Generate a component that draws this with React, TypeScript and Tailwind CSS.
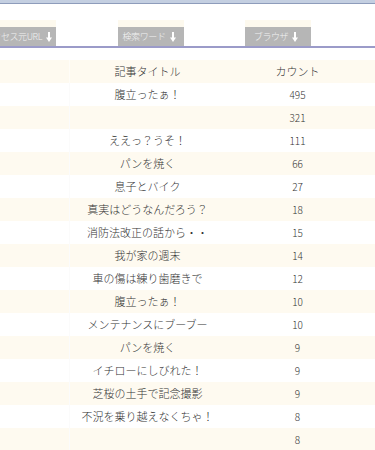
const rows: [string, string][] = [
  ["腹立ったぁ！", "495"],
  ["", "321"],
  ["ええっ？うそ！", "111"],
  ["パンを焼く", "66"],
  ["息子とバイク", "27"],
  ["真実はどうなんだろう？", "18"],
  ["消防法改正の話から・・", "15"],
  ["我が家の週末", "14"],
  ["車の傷は練り歯磨きで", "12"],
  ["腹立ったぁ！", "10"],
  ["メンテナンスにブーブー", "10"],
  ["パンを焼く", "9"],
  ["イチローにしびれた！", "9"],
  ["芝桜の土手で記念撮影", "9"],
  ["不況を乗り越えなくちゃ！", "8"],
  ["", "8"],
];

function DownArrow() {
  return (
    <svg width="6" height="10" viewBox="0 0 6 10" className="ml-[4px] shrink-0" aria-hidden>
      <rect x="2" y="0" width="2" height="6" fill="#ffffff" />
      <path d="M0 5.5 H6 L3 10 Z" fill="#ffffff" />
    </svg>
  );
}

function SortButton({ label, width, align }: { label: string; width: string; align: "end" | "center" }) {
  return (
    <div className={`flex flex-col ${width}`}>
      <div className="h-[7px] bg-[#fdf9ee]" />
      <div
        className={`flex h-[19px] items-center overflow-hidden whitespace-nowrap bg-[#b6b6b6] pr-[4px] text-[9px] font-light tracking-[-0.4px] text-[#f2f2f2] ${
          align === "end" ? "justify-end" : "justify-center"
        }`}
      >
        {label}
        <DownArrow />
      </div>
    </div>
  );
}

export default function App() {
  return (
    <div
      className="h-[450px] w-[375px] overflow-hidden bg-white text-[#333333]"
      style={{ fontFamily: '"MS PGothic", "Noto Sans CJK JP", "Liberation Sans", sans-serif' }}
    >
      <div className="h-[3px] bg-[#c4cfe1]" />
      <div className="h-px bg-[#8e9cbb]" />

      <div className="mt-[16px] flex items-end border-b-2 border-[#9b9bc9]">
        <SortButton label="アクセス元URL" width="w-[56px]" align="end" />
        <div className="ml-[62px]">
          <SortButton label="検索ワード" width="w-[66px]" align="center" />
        </div>
        <div className="ml-[61px]">
          <SortButton label="ブラウザ" width="w-[66px]" align="center" />
        </div>
      </div>

      <div className="mt-[12px] flex flex-col text-[11px] font-light">
        <div className="grid h-[23px] grid-cols-[70px_155px_145px_1fr] items-center bg-[#fefaf0]">
          <div className="h-full border-r border-[#fffdf8]" />
          <div className="text-center">記事タイトル</div>
          <div className="text-center">カウント</div>
          <div />
        </div>
        {rows.map(([title, count], i) => (
          <div
            key={i}
            className={`grid h-[23px] grid-cols-[70px_155px_145px_1fr] items-center ${
              i % 2 === 1 ? "bg-[#fefaf0]" : "bg-white"
            }`}
          >
            <div className="h-full border-r border-[#fbfbfb]" />
            <div className="whitespace-nowrap text-center">{title}</div>
            <div className="text-center text-[10px]">{count}</div>
            <div />
          </div>
        ))}
      </div>
    </div>
  );
}
